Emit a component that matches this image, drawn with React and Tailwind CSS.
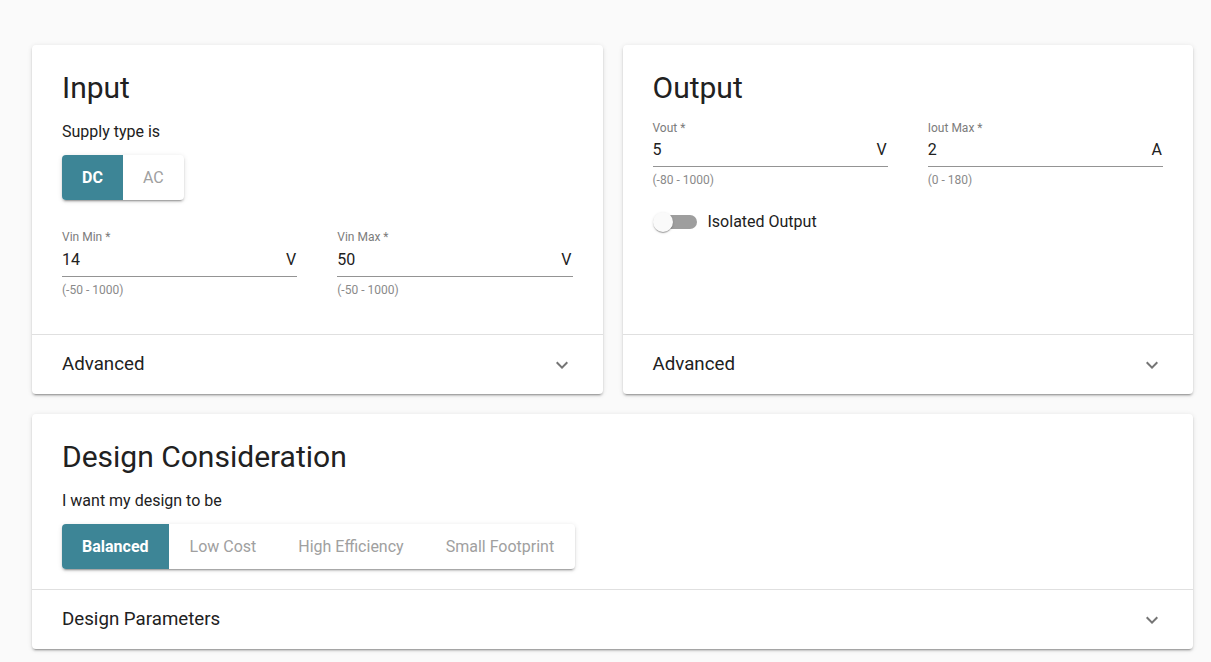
const cardShadow =
  'shadow-[0px_3px_1px_-2px_rgba(0,0,0,0.2),0px_2px_2px_0px_rgba(0,0,0,0.14),0px_1px_5px_0px_rgba(0,0,0,0.12)]';

const Chevron = () => (
  <svg width="24" height="24" viewBox="0 0 24 24" className="text-[#757575]">
    <path fill="currentColor" d="M16.59 8.59L12 13.17 7.41 8.59 6 10l6 6 6-6z" />
  </svg>
);

const ToggleGroup = ({ options, selected, wide = false }) => (
  <div className={`flex w-fit rounded-[4px] bg-white overflow-hidden ${cardShadow}`}>
    {options.map((opt) => (
      <div
        key={opt}
        className={
          opt === selected
            ? 'h-[45px] px-5 flex items-center bg-[#3d8596] text-white font-bold text-base'
            : wide
            ? 'h-[45px] px-[21px] flex items-center text-[#a0a0a0] text-base'
            : 'h-[45px] px-5 flex items-center text-[#a0a0a0] text-base'
        }
      >
        {opt}
      </div>
    ))}
  </div>
);

const Field = ({ label, value, unit, helper, tight = false }) => (
  <div>
    <div className="text-xs leading-4 text-[#7c7c7c]">{label}</div>
    <div
      className={`${tight ? 'mt-[2px]' : 'mt-[3px]'} h-[29px] pb-[4px] flex items-center justify-between border-b border-[#949494] text-base leading-6 text-[#212121]`}
    >
      <span>{value}</span>
      <span className="pr-[1px]">{unit}</span>
    </div>
    <div className="mt-[5px] text-xs leading-4 text-[#8a8a8a]">{helper}</div>
  </div>
);

const Footer = ({ label }) => (
  <div className="h-[60px] border-t border-[#e0e0e0] flex items-center justify-between pl-[30px] pr-[29px]">
    <span className="text-[18.72px] leading-6 text-[#212121] -mt-[1px]">{label}</span>
    <Chevron />
  </div>
);

const Heading = ({ children }) => (
  <h2 className="text-[30px] leading-[38px] text-[#212121]">{children}</h2>
);

export default function App() {
  return (
    <div
      className="min-h-screen bg-[#fafafa] pl-8 pr-[18px] pt-[45px] pb-4"
      style={{ fontFamily: 'Roboto, "Liberation Sans", sans-serif' }}
    >
      <div className="grid grid-cols-2 gap-5">
        <div className={`bg-white rounded-[4px] flex flex-col ${cardShadow}`}>
          <div className="flex-1 pl-[30px] pr-[30px] pt-[24px] pb-[36px]">
            <Heading>Input</Heading>
            <div className="mt-[13px] text-base leading-6 text-[#212121]">Supply type is</div>
            <div className="mt-[11px]">
              <ToggleGroup options={['DC', 'AC']} selected="DC" />
            </div>
            <div className="mt-[29px] grid grid-cols-2 gap-10">
              <Field label="Vin Min *" value="14" unit="V" helper="(-50 - 1000)" />
              <Field label="Vin Max *" value="50" unit="V" helper="(-50 - 1000)" />
            </div>
          </div>
          <Footer label="Advanced" />
        </div>

        <div className={`bg-white rounded-[4px] flex flex-col ${cardShadow}`}>
          <div className="flex-1 pl-[30px] pr-[30px] pt-[24px]">
            <Heading>Output</Heading>
            <div className="mt-[13px] grid grid-cols-2 gap-10">
              <Field label="Vout *" value="5" unit="V" helper="(-80 - 1000)" tight />
              <Field label="Iout Max *" value="2" unit="A" helper="(0 - 180)" tight />
            </div>
            <div className="mt-[22px] flex items-center">
              <div className="relative w-[44px] h-5">
                <div className="absolute left-[10px] top-[3px] w-[34px] h-[14px] rounded-full bg-[#9e9e9e]" />
                <div className="absolute left-0 top-0 w-5 h-5 rounded-full bg-[#fafafa] shadow-[0px_2px_1px_-1px_rgba(0,0,0,0.2),0px_1px_1px_0px_rgba(0,0,0,0.14),0px_1px_3px_0px_rgba(0,0,0,0.12)]" />
              </div>
              <span className="ml-[11px] text-base text-[#212121]">Isolated Output</span>
            </div>
          </div>
          <Footer label="Advanced" />
        </div>
      </div>

      <div className={`mt-5 bg-white rounded-[4px] ${cardShadow}`}>
        <div className="pl-[30px] pr-[30px] pt-[24px] pb-5">
          <Heading>Design Consideration</Heading>
          <div className="mt-[13px] text-base leading-6 text-[#212121]">I want my design to be</div>
          <div className="mt-[11px]">
            <ToggleGroup
              options={['Balanced', 'Low Cost', 'High Efficiency', 'Small Footprint']}
              selected="Balanced"
              wide
            />
          </div>
        </div>
        <Footer label="Design Parameters" />
      </div>
    </div>
  );
}
